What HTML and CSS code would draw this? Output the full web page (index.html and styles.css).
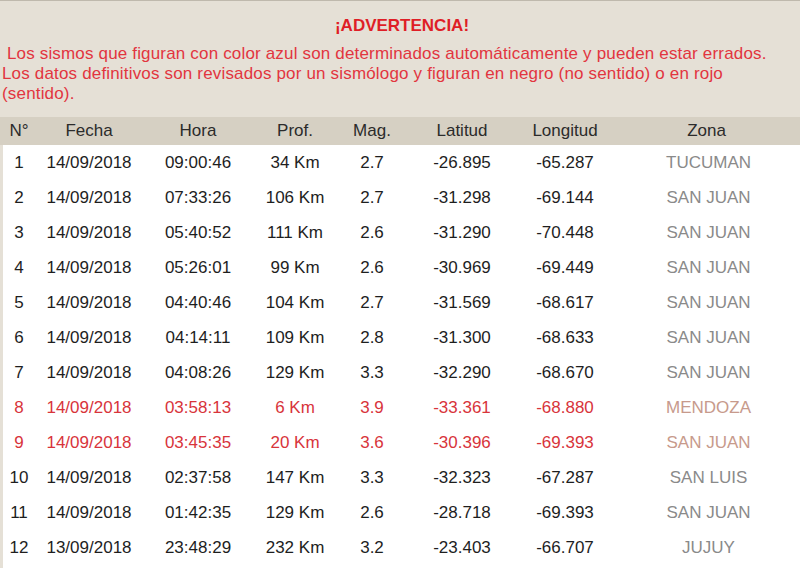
FILE: index.html
```html
<!DOCTYPE html>
<html lang="es">
<head>
<meta charset="utf-8">
<link rel="stylesheet" href="styles.css">
</head>
<body>
<div class="page">
  <div class="warn">
    <h2 class="warn-title">¡ADVERTENCIA!</h2>
    <p class="warn-text">&nbsp;Los sismos que figuran con color azul son determinados automáticamente y pueden estar errados. Los datos definitivos son revisados por un sismólogo y figuran en negro (no sentido) o en rojo (sentido).</p>
  </div>
  <div class="table-wrap">
  <table class="quakes">
    <colgroup>
      <col class="c-n"><col class="c-fecha"><col class="c-hora"><col class="c-prof"><col class="c-mag"><col class="c-lat"><col class="c-lon"><col class="c-zona">
    </colgroup>
    <thead>
      <tr><th>N°</th><th>Fecha</th><th>Hora</th><th>Prof.</th><th>Mag.</th><th>Latitud</th><th>Longitud</th><th>Zona</th></tr>
    </thead>
    <tbody>
      <tr><td>1</td><td>14/09/2018</td><td>09:00:46</td><td>34 Km</td><td>2.7</td><td>-26.895</td><td>-65.287</td><td class="zona">TUCUMAN</td></tr>
      <tr><td>2</td><td>14/09/2018</td><td>07:33:26</td><td>106 Km</td><td>2.7</td><td>-31.298</td><td>-69.144</td><td class="zona">SAN JUAN</td></tr>
      <tr><td>3</td><td>14/09/2018</td><td>05:40:52</td><td>111 Km</td><td>2.6</td><td>-31.290</td><td>-70.448</td><td class="zona">SAN JUAN</td></tr>
      <tr><td>4</td><td>14/09/2018</td><td>05:26:01</td><td>99 Km</td><td>2.6</td><td>-30.969</td><td>-69.449</td><td class="zona">SAN JUAN</td></tr>
      <tr><td>5</td><td>14/09/2018</td><td>04:40:46</td><td>104 Km</td><td>2.7</td><td>-31.569</td><td>-68.617</td><td class="zona">SAN JUAN</td></tr>
      <tr><td>6</td><td>14/09/2018</td><td>04:14:11</td><td>109 Km</td><td>2.8</td><td>-31.300</td><td>-68.633</td><td class="zona">SAN JUAN</td></tr>
      <tr><td>7</td><td>14/09/2018</td><td>04:08:26</td><td>129 Km</td><td>3.3</td><td>-32.290</td><td>-68.670</td><td class="zona">SAN JUAN</td></tr>
      <tr class="felt"><td>8</td><td>14/09/2018</td><td>03:58:13</td><td>6 Km</td><td>3.9</td><td>-33.361</td><td>-68.880</td><td class="zona">MENDOZA</td></tr>
      <tr class="felt"><td>9</td><td>14/09/2018</td><td>03:45:35</td><td>20 Km</td><td>3.6</td><td>-30.396</td><td>-69.393</td><td class="zona">SAN JUAN</td></tr>
      <tr><td>10</td><td>14/09/2018</td><td>02:37:58</td><td>147 Km</td><td>3.3</td><td>-32.323</td><td>-67.287</td><td class="zona">SAN LUIS</td></tr>
      <tr><td>11</td><td>14/09/2018</td><td>01:42:35</td><td>129 Km</td><td>2.6</td><td>-28.718</td><td>-69.393</td><td class="zona">SAN JUAN</td></tr>
      <tr><td>12</td><td>13/09/2018</td><td>23:48:29</td><td>232 Km</td><td>3.2</td><td>-23.403</td><td>-66.707</td><td class="zona">JUJUY</td></tr>
    </tbody>
  </table>
  </div>
</div>
</body>
</html>
```
FILE: styles.css
```css
html, body {
  margin: 0;
  padding: 0;
}
body {
  background: #e5e0d6;
  font-family: "Liberation Sans", Arial, sans-serif;
  overflow: hidden;
}
.page {
  width: 800px;
  height: 568px;
  border-top: 1px solid #bfb9ad;
  box-sizing: border-box;
  display: flex;
  flex-direction: column;
}
.warn {
  height: 116px;
  flex: none;
  box-sizing: border-box;
  padding: 15px 30px 0 2px;
}
.warn-title {
  margin: 0 0 8px 0;
  padding-left: 32px;
  text-align: center;
  font-size: 17px;
  line-height: 20px;
  font-weight: bold;
  color: #df1e26;
}
.warn-text {
  margin: 0;
  font-size: 17px;
  line-height: 20px;
  letter-spacing: 0.17px;
  color: #e2353f;
}
.table-wrap {
  flex: 1;
  margin-left: 3px;
  background: #ffffff;
}
.quakes {
  width: 797px;
  border-collapse: collapse;
  table-layout: fixed;
  font-size: 17px;
}
.c-n { width: 32px; }
.c-fecha { width: 108px; }
.c-hora { width: 110px; }
.c-prof { width: 84px; }
.c-mag { width: 70px; }
.c-lat { width: 110px; }
.c-lon { width: 96px; }
.c-zona { width: 187px; }
.quakes thead tr {
  background: #d6d0c3;
}
.quakes th {
  height: 28px;
  padding: 0;
  font-weight: normal;
  color: #2b2b2b;
  text-align: center;
}
.quakes thead th:first-child {
  box-shadow: -3px 0 0 #d6d0c3;
}
.quakes tbody tr {
  background: #ffffff;
}
.quakes td {
  height: 35px;
  padding: 0;
  text-align: center;
  color: #1e1e1e;
  white-space: nowrap;
}
.quakes td.zona {
  color: #8a8a8a;
  padding-left: 4px;
}
.quakes tr.felt td {
  color: #d8343b;
}
.quakes tr.felt td.zona {
  color: #c79a8c;
}
```
